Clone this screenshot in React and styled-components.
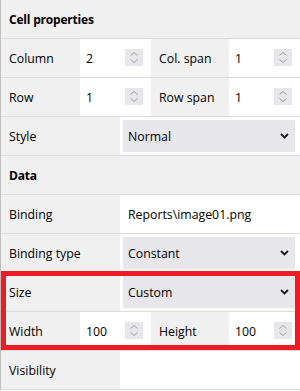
import React from "react";
import styled, { createGlobalStyle } from "styled-components";

const Global = createGlobalStyle`
  html, body { margin: 0; padding: 0; background: #fff; }
  body { font-family: "Open Sans", "Noto Sans", sans-serif; font-size: 12.3px; color: #000; }
`;

const Panel = styled.div`
  position: relative;
  width: 300px;
  box-sizing: border-box;
  border-left: 1px solid #bdbdbd;
  background: #fff;
`;

const Header = styled.div`
  height: 38px;
  border-bottom: 1px solid #dcdcdc;
  background: #f0f0f0;
  display: flex;
  align-items: center;
  padding-left: 8px;
  font-weight: 700;
  font-size: 12px;
  letter-spacing: -0.2px;
`;

const Row = styled.div`
  display: grid;
  grid-template-columns: ${(p) => (p.$pair ? "79px 71px 78px 71px" : "119px 180px")};
  height: 38px;
  border-bottom: 1px solid #dcdcdc;
`;

const Label = styled.div`
  background: #f0f0f0;
  display: flex;
  align-items: center;
  padding-left: 8px;
`;

const Value = styled.div`
  background: #fff;
  display: flex;
  align-items: center;
  padding-left: ${(p) => (p.$wide ? "8px" : "6px")};
  padding-right: 8px;
  justify-content: space-between;
`;

const SelectCell = styled.div`
  background: #fff;
  padding: 3px 5px 3px 3px;
  display: flex;
`;

const Select = styled.div`
  flex: 1;
  background: #e6e6eb;
  display: flex;
  align-items: center;
  justify-content: space-between;
  padding: 0 6px 0 5px;
`;

const SpinBox = styled.div`
  width: 18px;
  height: 17px;
  background: #e6e6eb;
  display: flex;
  align-items: center;
  justify-content: center;
  margin-top: -1px;
`;

const Highlight = styled.div`
  position: absolute;
  left: 0px;
  top: 271px;
  width: 299px;
  height: 79px;
  box-sizing: border-box;
  border: 5px solid #ed1c24;
  pointer-events: none;
`;

const Spinner = () => (
  <SpinBox>
    <svg width="18" height="17" viewBox="0 0 18 17">
      <path d="M5.5 6.5 L9 3.5 L12.5 6.5" fill="none" stroke="#a0a0a0" strokeWidth="1" />
      <path d="M5.5 10.5 L9 13.5 L12.5 10.5" fill="none" stroke="#a0a0a0" strokeWidth="1" />
    </svg>
  </SpinBox>
);

const Chevron = () => (
  <svg width="9" height="6" viewBox="0 0 9 6">
    <path d="M1 1 L4.5 4.5 L8 1" fill="none" stroke="#1a1a1a" strokeWidth="1.8" />
  </svg>
);

const NumberRow = ({ a, av, b, bv }) => (
  <Row $pair>
    <Label>{a}</Label>
    <Value>
      {av}
      <Spinner />
    </Value>
    <Label>{b}</Label>
    <Value>
      {bv}
      <Spinner />
    </Value>
  </Row>
);

const SelectRow = ({ label, value }) => (
  <Row>
    <Label>{label}</Label>
    <SelectCell>
      <Select>
        {value}
        <Chevron />
      </Select>
    </SelectCell>
  </Row>
);

export default function App() {
  return (
    <>
      <Global />
      <Panel>
        <Header>Cell properties</Header>
        <NumberRow a="Column" av="2" b="Col. span" bv="1" />
        <NumberRow a="Row" av="1" b="Row span" bv="1" />
        <SelectRow label="Style" value="Normal" />
        <Header>Data</Header>
        <Row>
          <Label>Binding</Label>
          <Value $wide>Reports\image01.png</Value>
        </Row>
        <SelectRow label="Binding type" value="Constant" />
        <SelectRow label="Size" value="Custom" />
        <NumberRow a="Width" av="100" b="Height" bv="100" />
        <Row>
          <Label>Visibility</Label>
          <Value $wide />
        </Row>
        <Highlight />
      </Panel>
    </>
  );
}
